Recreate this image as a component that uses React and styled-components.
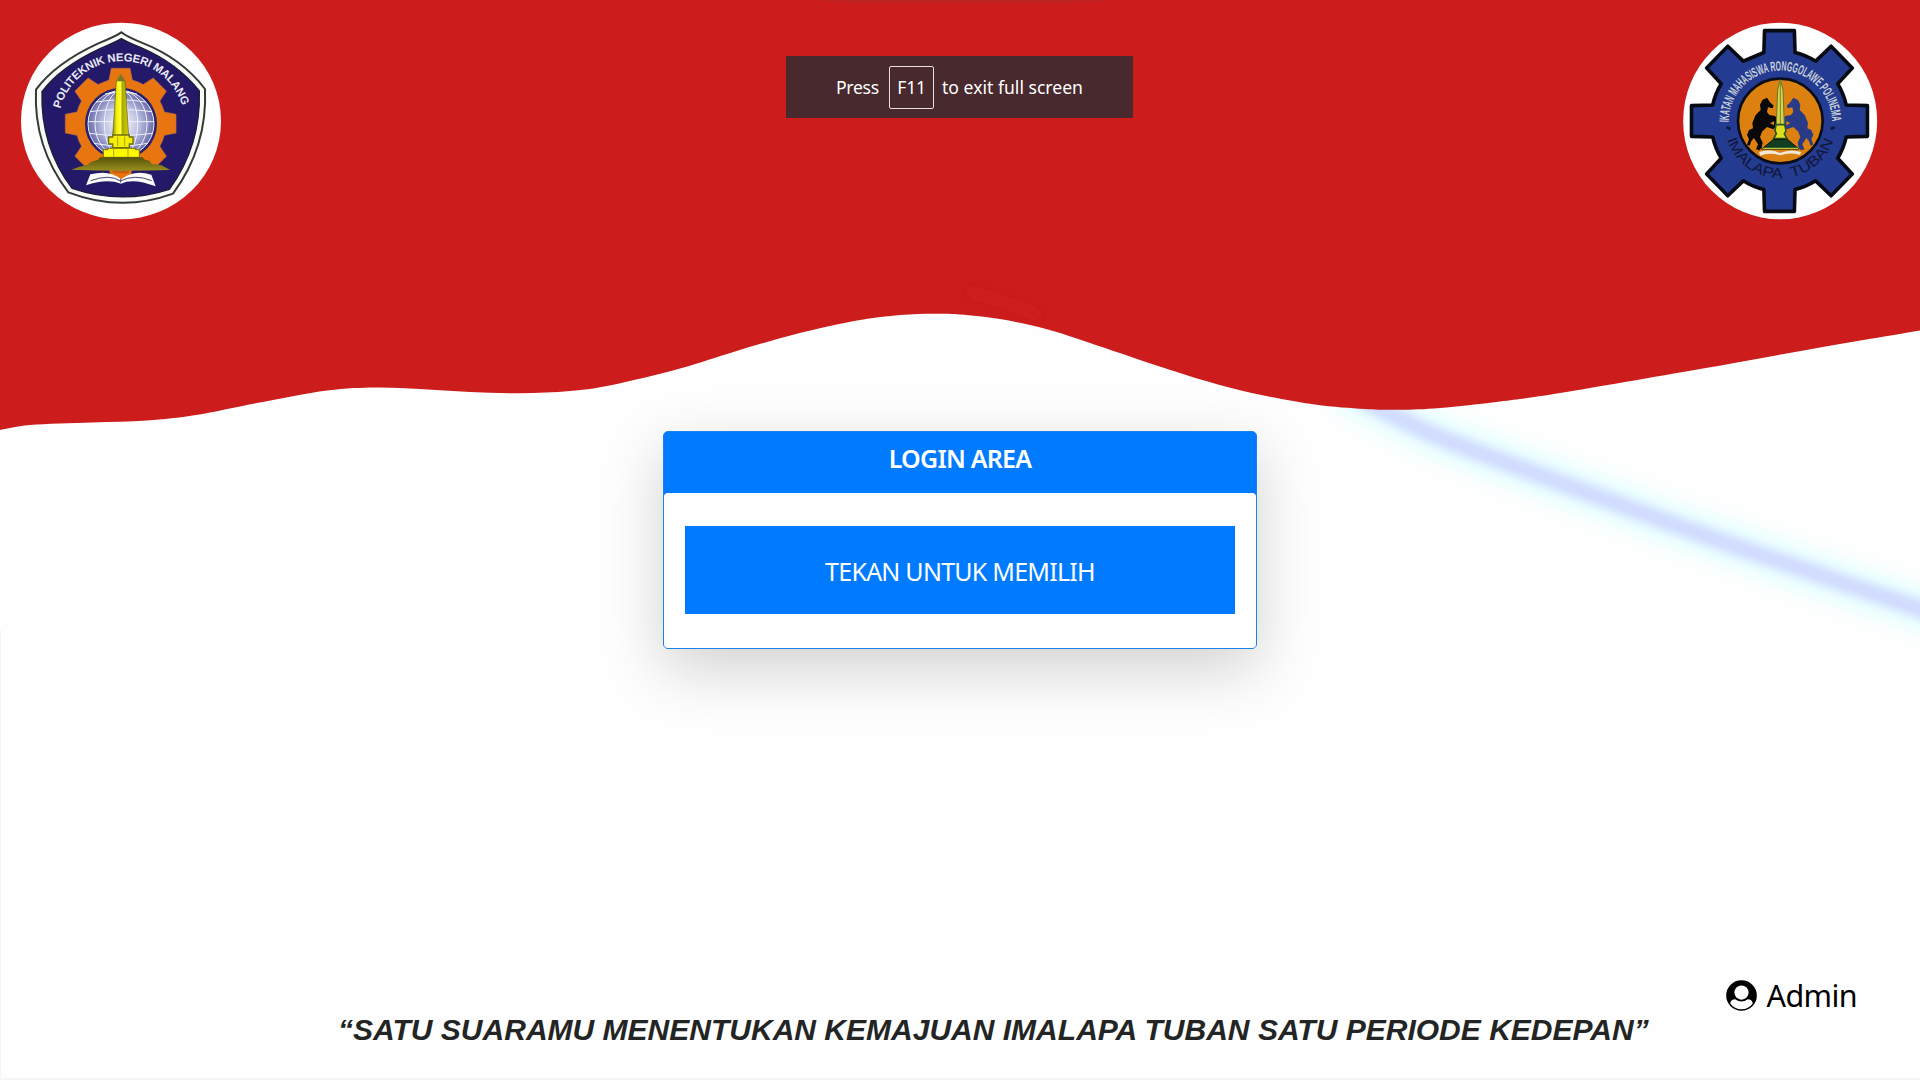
import React from "react";
import styled, { createGlobalStyle } from "styled-components";

const Global = createGlobalStyle`
  * { box-sizing: border-box; }
  body { margin: 0; background: #fefefe; overflow: hidden; }
`;

const sans = '"Noto Sans", "Open Sans", sans-serif';

const Page = styled.div`
  position: relative;
  isolation: isolate;
  width: 1920px;
  height: 1080px;
  overflow: hidden;
  display: grid;
  grid-template-rows: 431px 219px 1fr;
  background: #fefefe;
  border-bottom: 2px solid #f4f8f4;
  font-family: ${sans};
`;

const Backdrop = styled.svg`
  position: absolute;
  inset: 0;
  z-index: -1;
`;

const Header = styled.header`
  display: flex;
  justify-content: space-between;
  align-items: flex-start;
  padding: 10px 30px 0 10px;
`;

const Logo = styled.svg`
  width: 220px;
  height: 220px;
  flex: none;
  font-family: "Liberation Sans", Arial, sans-serif;
`;

const Notice = styled.div`
  display: flex;
  align-items: center;
  width: 347px;
  height: 62px;
  margin: 46px 0 0 19px;
  padding-left: 50px;
  background: #48292d;
  color: #fff;
  font-size: 17.6px;
  white-space: nowrap;
`;

const NoticeText = styled.span`
  width: ${(p) => p.$w}px;
  letter-spacing: ${(p) => p.$ls}px;
`;

const Key = styled.kbd`
  width: 45px;
  height: 43px;
  margin: 0 8px 0 2px;
  border: 1.5px solid #eadfe0;
  border-radius: 2px;
  font: inherit;
  line-height: 40px;
  text-align: center;
  letter-spacing: -0.3px;
`;

const Main = styled.main`
  display: flex;
  justify-content: center;
`;

const Card = styled.section`
  width: 594px;
  height: 218px;
  display: flex;
  flex-direction: column;
  border: 1px solid #1c82ee;
  border-radius: 5px;
  background: #007bff;
  box-shadow: 0 20px 62px rgba(0, 0, 0, 0.18);
`;

const CardTitle = styled.h1`
  height: 61px;
  margin: 0;
  padding-top: 8px;
  color: #fff;
  font-size: 25px;
  font-weight: 600;
  line-height: 36px;
  letter-spacing: ${(p) => p.$ls}px;
  text-align: center;
`;

const CardBody = styled.div`
  flex: 1;
  display: flex;
  justify-content: center;
  padding-top: 33px;
  border-radius: 4px;
  background: #fff;
`;

const VoteButton = styled.button`
  width: 550px;
  height: 88px;
  padding: 2px 0 0;
  border: 0;
  background: #007bff;
  color: #fff;
  font-family: ${sans};
  font-size: 25px;
  letter-spacing: ${(p) => p.$ls}px;
`;

const Footer = styled.footer`
  display: flex;
  flex-direction: column;
  justify-content: flex-end;
  padding-bottom: 30px;
`;

const AdminLink = styled.a`
  align-self: flex-end;
  display: flex;
  align-items: center;
  gap: 10px;
  height: 44px;
  margin-right: 63px;
  color: #000;
  font-size: 30.5px;
  font-weight: 400;
  line-height: 44px;
  letter-spacing: ${(p) => p.$ls}px;
`;

const UserIcon = styled.svg`
  width: 31px;
  height: 31px;
`;

const Motto = styled.p`
  margin: -5px 0 0 338px;
  color: #222524;
  font: italic 700 30px/36px "Liberation Sans", Arial, sans-serif;
  letter-spacing: ${(p) => p.$ls}px;
  white-space: nowrap;
`;

const wave = [
  [0, 430], [30, 425], [92, 422.5], [147, 420.5], [196, 415], [257, 403], [327, 390.5],
  [376, 387.5], [420, 389], [470, 392], [520, 393.3], [570, 391], [612, 385],
  [680, 368.5], [735, 351.5], [796, 334], [857, 320.5], [900, 315], [933, 313.7],
  [960, 314.5], [1000, 319], [1046, 329], [1090, 343], [1155, 365], [1206, 381],
  [1254, 393.500], [1315, 404.5], [1365, 409], [1400, 409.8], [1440, 408], [1500, 401.5],
  [1560, 393], [1700, 369], [1820, 347.5], [1920, 330.5],
];

function smooth(pts) {
  let d = "";
  for (let i = 0; i < pts.length - 1; i++) {
    const a = pts[i - 1] || pts[i];
    const b = pts[i];
    const c = pts[i + 1];
    const e = pts[i + 2] || c;
    d += `C${b[0] + (c[0] - a[0]) / 6},${b[1] + (c[1] - a[1]) / 6} ${c[0] - (e[0] - b[0]) / 6},${c[1] - (e[1] - b[1]) / 6} ${c}`;
  }
  return d;
}

const streakPoints = [
  [1340, 388], [1389, 413], [1425, 431], [1480, 453], [1572, 487],
  [1695, 532], [1817, 574], [1920, 609], [1970, 625],
];
const streak = `M${streakPoints[0]}${smooth(streakPoints)}`;

function Background() {
  return (
    <Backdrop width="1920" height="1080" viewBox="0 0 1920 1080">
      <defs>
        <filter id="halo" x="-10%" y="-30%" width="120%" height="160%"><feGaussianBlur stdDeviation="9" /></filter>
        <filter id="core" x="-10%" y="-30%" width="120%" height="160%"><feGaussianBlur stdDeviation="5" /></filter>
        <filter id="glow" x="-50%" y="-100%" width="200%" height="300%"><feGaussianBlur stdDeviation="5" /></filter>
        <linearGradient id="topShade" x2="0" y2="1"><stop offset="0" stopColor="#a83030" stopOpacity=".5" /><stop offset="1" stopColor="#cc1c1c" stopOpacity="0" /></linearGradient>
      </defs>
      <path d={streak} fill="none" stroke="#e8ffff" strokeWidth="44" filter="url(#halo)" />
      <path d={streak} fill="none" stroke="#d0daff" strokeWidth="18" filter="url(#core)" />
      <path d={`M0,0L${wave[0]}${smooth(wave)}L1920,0Z`} fill="#cc1c1c" />
      <path d="M820 0H1110L1050 6H865Z" fill="url(#topShade)" />
      <path d="M968 291Q1010 303 1040 316" fill="none" stroke="#d62028" strokeOpacity=".45" strokeWidth="8" filter="url(#glow)" />
      <path d="M0 630V1080" stroke="#f1f6f1" strokeWidth="2" />
    </Backdrop>
  );
}

function gear(cx, cy, teeth, root, tip, halfRoot, halfTip) {
  let d = "";
  for (let i = 0; i < teeth; i++) {
    const t = (i * 2 * Math.PI) / teeth;
    const at = (r, w) => {
      const x = w * Math.cos(t) + r * Math.sin(t);
      const y = w * Math.sin(t) - r * Math.cos(t);
      return `${(cx + x).toFixed(1)} ${(cy + y).toFixed(1)}`;
    };
    d += `${i ? `A${root} ${root} 0 0 1 ` : "M"}${at(root * 0.97, -halfRoot)}L${at(tip, -halfTip)}L${at(tip, halfTip)}L${at(root * 0.97, halfRoot)}`;
  }
  return d + "Z";
}

function CampusLogo() {
  return (
    <Logo viewBox="0 0 660 660">
      <defs>
        <path id="campusArc" d="M151 296A190 190 0 0 1 519 296" />
        <radialGradient id="globe"><stop offset="0" stopColor="#fff" /><stop offset=".55" stopColor="#bcc0df" /><stop offset="1" stopColor="#696cab" /></radialGradient>
        <linearGradient id="tower"><stop offset="0" stopColor="#8d8b16" /><stop offset=".25" stopColor="#f4f000" /><stop offset=".5" stopColor="#ffff3c" /><stop offset=".6" stopColor="#aaa800" /><stop offset="1" stopColor="#d6d300" /></linearGradient>
        <linearGradient id="base" x2="0" y2="1"><stop offset="0" stopColor="#57520b" /><stop offset="1" stopColor="#99901d" /></linearGradient>
      </defs>
      <ellipse cx="333" cy="333" rx="300" ry="295" fill="#fefefe" />
      <path d="M334 67Q350 80 395 98Q515 145 585 237Q593 410 489 551Q334 608 175 547Q70 410 78 239Q135 160 265 100Q315 80 334 67Z" fill="#f8faf4" stroke="#343a38" strokeWidth="6" />
      <path d="M334 86Q350 96 393 113Q502 160 568 243Q573 408 478 538Q334 585 186 535Q91 408 96 245Q150 172 270 116Q315 97 334 86Z" fill="#241969" stroke="#171d39" strokeWidth="4" />
      <path d={gear(332, 341, 8, 135, 166, 35, 28)} fill="#e8750f" stroke="#bd6e4d" strokeWidth="2" />
      <circle cx="333" cy="341" r="108" fill="#282172" />
      <circle cx="333" cy="341" r="99" fill="url(#globe)" />
      <g fill="none" stroke="#eef0fb" strokeWidth="3">
        <circle cx="333" cy="341" r="99" />
        <ellipse cx="333" cy="341" rx="78" ry="99" /><ellipse cx="333" cy="341" rx="50" ry="99" /><ellipse cx="333" cy="341" rx="22" ry="99" />
        <path d="M234 335H432M240 305Q333 292 426 305M258 276Q333 263 408 276M285 252Q333 242 381 252M238 370Q333 383 428 370M252 400Q333 415 414 400" />
      </g>
      <path d="M302 478H365L352 490H313Z" fill="#c85c13" />
      <path d="M332 193L345 213L356 378H308L319 213Z" fill="url(#tower)" stroke="#5c5b2b" strokeWidth="2" />
      <path d="M332 193L344 214H320Z" fill="#78772a" />
      <path d="M308 375H358V381H369V402H358V413H308V402H296V381H308Z" fill="#f5ef08" stroke="#706d08" strokeWidth="4" />
      <path d="M294 415H376V419H388V442H280V419H294Z" fill="#fff900" stroke="#77740c" strokeWidth="3" />
      <path d="M311 415V440M354 415V440M323 380V408M344 380V408" stroke="#aaa419" strokeWidth="3" />
      <path d="M270 442H397L405 449L418 452L425 462L455 466L480 480Q333 485 184 479L208 470L232 464L244 455L263 450Z" fill="url(#base)" />
      <path d="M228 526L241 493Q300 478 333 508Q370 478 424 494L437 529Q370 503 333 521Q290 505 228 526Z" fill="#f8faf8" />
      <path d="M242 512Q300 491 331 513Q375 491 425 512M332 507V518" fill="none" stroke="#4b426f" strokeWidth="3" />
      <text fill="#e9e9f2" fontSize="34" fontWeight="700"><textPath href="#campusArc" textLength="492" lengthAdjust="spacing">POLITEKNIK NEGERI MALANG</textPath></text>
    </Logo>
  );
}

const horse = "M291 263L300 277L311 287L308 295L294 292L291 306L298 315L315 318L322 326L320 348L311 350L313 334L300 339L318 350L310 358L291 351L276 365L270 381L278 398L275 413L268 421L258 418L264 403L252 384L244 393L239 407L231 404L237 388L231 375L237 360L249 355L247 339L257 315L272 300L270 284L277 270Z";

function UnionLogo() {
  return (
    <Logo viewBox="0 0 660 660">
      <defs>
        <path id="unionTop" d="M176 337A155 155 0 0 1 486 337" />
        <path id="unionBottom" d="M169 381A168 168 0 0 0 493 381" />
      </defs>
      <ellipse cx="330.500" cy="333" rx="291" ry="295" fill="#fefefe" />
      <path d={gear(332, 333, 8, 212, 271, 48, 46)} transform="translate(5 0) scale(.974 1)" fill="#233b91" stroke="#070a12" strokeWidth="11" strokeLinejoin="round" />
      <circle cx="331" cy="333" r="127" fill="#dc800f" stroke="#0b0d18" strokeWidth="8" />
      <path d={horse} fill="#08080b" />
      <path d={horse} transform="translate(661 0) scale(-1 1)" fill="#293a86" />
      <path d="M331 209L339 240L343 345H319L323 240Z" fill="#dbd247" stroke="#63782c" strokeWidth="3" />
      <path d="M331 213V345" stroke="#6c8b39" strokeWidth="3" />
      <path d="M318 344H344L348 362L343 372L351 386H311L319 371L315 361Z" fill="#dfdf22" stroke="#2e531e" strokeWidth="5" />
      <path d="M311 388H352L387 417H275Z" fill="#103e20" stroke="#07150c" strokeWidth="3" />
      <path d="M278 415H385" stroke="#b9c442" strokeWidth="4" />
      <path d="M267 426Q302 414 330 429Q362 415 394 426L389 435Q360 426 331 436Q297 426 270 437Z" fill="#f0e9d7" />
      <text fill="#c9d0d8" fontSize="41" fontWeight="700"><textPath href="#unionTop" textLength="484" lengthAdjust="spacingAndGlyphs">IKATAN MAHASISWA RONGGOLAWE POLINEMA</textPath></text>
      <text fill="#101637" fontSize="43" wordSpacing="14"><textPath href="#unionBottom" textLength="418" startOffset="8" lengthAdjust="spacingAndGlyphs">IMALAPA TUBAN</textPath></text>
      <path d="M170 352L182 357M494 352L482 357" stroke="#11183a" strokeWidth="8" />
    </Logo>
  );
}

export default function App() {
  return (
    <Page>
      <Global />
      <Background />
      <Header>
        <CampusLogo />
        <Notice>
          <NoticeText $w={51} $ls={-0.3}>Press</NoticeText>
          <Key>F11</Key>
          <NoticeText $w={150} $ls={0}>to exit full screen</NoticeText>
        </Notice>
        <UnionLogo />
      </Header>
      <Main>
        <Card>
          <CardTitle $ls={-0.75}>LOGIN AREA</CardTitle>
          <CardBody>
            <VoteButton $ls={-0.75}>TEKAN UNTUK MEMILIH</VoteButton>
          </CardBody>
        </Card>
      </Main>
      <Footer>
        <AdminLink $ls={-0.6}>
          <UserIcon viewBox="0 0 31 31">
            <circle cx="15.500" cy="15.500" r="15.300" fill="#000" />
            <path d="M4.200 23.400C4.700 20.600 6.500 19.200 9.200 19.200Q15.500 24 21.800 19.200C24.500 19.200 26.300 20.600 26.800 23.400A13.900 13.900 0 0 1 4.200 23.400Z" fill="#fefefe" />
            <circle cx="15.500" cy="12.600" r="7.100" fill="#fefefe" />
          </UserIcon>
          Admin
        </AdminLink>
        <Motto $ls={0.01}>“SATU SUARAMU MENENTUKAN KEMAJUAN IMALAPA TUBAN SATU PERIODE KEDEPAN”</Motto>
      </Footer>
    </Page>
  );
}
